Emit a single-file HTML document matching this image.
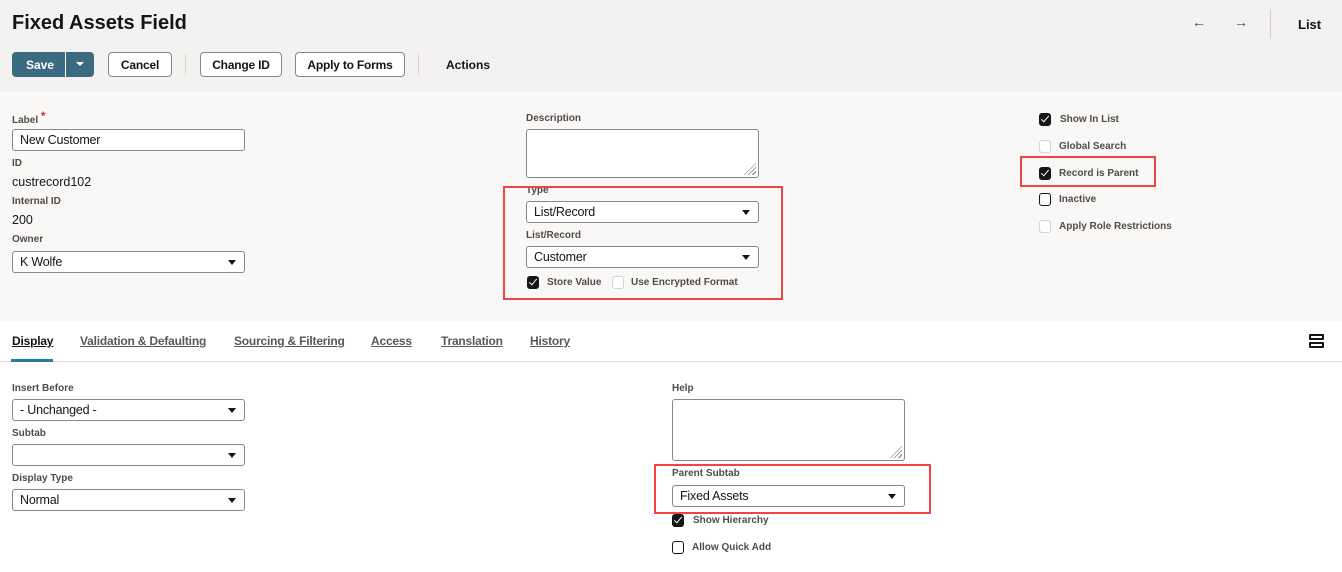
<!DOCTYPE html>
<html><head><style>
*{box-sizing:border-box;margin:0;padding:0}
body{width:1342px;height:572px;position:relative;background:#fff;font-family:"Liberation Sans",Arial,sans-serif;color:#161513;overflow:hidden}
.a{position:absolute}
.hdr{left:0;top:0;width:1342px;height:92px;background:#f3f2f1}
.frm{left:0;top:92px;width:1342px;height:229px;background:#f9f8f7}
.btn{position:absolute;top:52px;height:25px;border:1px solid #8a8886;border-radius:4px;background:#fff;font-size:12px;font-weight:bold;display:flex;align-items:center;justify-content:center;color:#161513;letter-spacing:-0.2px}
.sep{position:absolute;top:54px;width:1px;height:21px;background:#d6d3d0}
.lbl{position:absolute;font-size:10px;font-weight:bold;color:#4f4c49}
.val{position:absolute;font-size:12.5px}
.inp{position:absolute;height:22px;border:1px solid #8a8886;border-radius:3px;background:#fff;font-size:12.5px;padding:3px 7px;line-height:14px;letter-spacing:-0.2px}
.sel::after{content:"";position:absolute;right:8px;top:8px;border-left:4px solid transparent;border-right:4px solid transparent;border-top:5px solid #161513}
.ta{position:absolute;border:1px solid #8a8886;border-radius:3px;background:#fff}
.ta::after{content:"";position:absolute;right:2px;bottom:2px;width:12px;height:12px;background:repeating-linear-gradient(135deg,transparent 0 2px,#777 2px 3px);clip-path:polygon(100% 0,100% 100%,0 100%)}
.cb{position:absolute;width:12px;height:13px;border-radius:3px;border:1.5px solid #161513;background:#fff}
.cb.on{background:#161513}
.cb.on::after{content:"";position:absolute;left:3px;top:0px;width:3px;height:7px;border:solid #fff;border-width:0 1.5px 1.5px 0;transform:rotate(40deg)}
.cb.dis{border:1px solid #d6d3d0}
.ct{position:absolute;font-size:10px;font-weight:bold;color:#4f4c49}
.red{position:absolute;border:2px solid #f04343}
.tab{position:absolute;top:334px;font-size:12px;font-weight:bold;color:#5a5855;letter-spacing:-0.2px;text-decoration:underline;text-decoration-thickness:1px}
</style></head><body>
<div class="a hdr"></div>
<div class="a frm"></div>
<div class="a" style="left:12px;top:12px;font-size:20px;font-weight:bold">Fixed Assets Field</div>
<div class="a" style="left:1192px;top:14px;font-size:14px;font-weight:bold;color:#444">&#8592;</div>
<div class="a" style="left:1234px;top:14px;font-size:14px;font-weight:bold;color:#444">&#8594;</div>
<div class="a" style="left:1270px;top:9px;width:1px;height:30px;background:#d0cdca"></div>
<div class="a" style="left:1298px;top:17px;font-size:13px;font-weight:bold">List</div>

<div class="a" style="left:12px;top:52px;width:82px;height:25px;background:#3a6b81;border-radius:4px"></div>
<div class="a" style="left:65px;top:52px;width:1px;height:25px;background:#fff"></div>
<div class="a" style="left:26px;top:58px;font-size:12px;font-weight:bold;color:#fff">Save</div>
<div class="a" style="left:76px;top:62px;border-left:4px solid transparent;border-right:4px solid transparent;border-top:4px solid #fff"></div>
<div class="btn" style="left:108px;width:64px">Cancel</div>
<div class="sep" style="left:185px"></div>
<div class="btn" style="left:200px;width:82px">Change ID</div>
<div class="btn" style="left:295px;width:110px">Apply to Forms</div>
<div class="sep" style="left:418px"></div>
<div class="a" style="left:446px;top:58px;font-size:12px;font-weight:bold">Actions</div>

<div class="lbl" style="left:12px;top:112px">Label <span style="color:#c33;font-size:12px;position:relative;top:-3px">*</span></div>
<div class="inp" style="left:12px;top:129px;width:233px">New Customer</div>
<div class="lbl" style="left:12px;top:158px">ID</div>
<div class="val" style="left:12px;top:175px">custrecord102</div>
<div class="lbl" style="left:12px;top:196px">Internal ID</div>
<div class="val" style="left:12px;top:213px">200</div>
<div class="lbl" style="left:12px;top:234px">Owner</div>
<div class="inp sel" style="left:12px;top:251px;width:233px">K Wolfe</div>

<div class="lbl" style="left:526px;top:113px">Description</div>
<div class="ta" style="left:526px;top:129px;width:233px;height:49px"></div>
<div class="lbl" style="left:526px;top:185px">Type</div>
<div class="inp sel" style="left:526px;top:201px;width:233px">List/Record</div>
<div class="lbl" style="left:526px;top:230px">List/Record</div>
<div class="inp sel" style="left:526px;top:246px;width:233px">Customer</div>
<div class="cb on" style="left:527px;top:276px"></div>
<div class="ct" style="left:547px;top:277px">Store Value</div>
<div class="cb dis" style="left:612px;top:276px"></div>
<div class="ct" style="left:631px;top:277px">Use Encrypted Format</div>
<div class="red" style="left:503px;top:186px;width:280px;height:114px"></div>

<div class="cb on" style="left:1039px;top:113px"></div>
<div class="ct" style="left:1060px;top:114px">Show In List</div>
<div class="cb dis" style="left:1039px;top:140px"></div>
<div class="ct" style="left:1059px;top:141px">Global Search</div>
<div class="cb on" style="left:1039px;top:167px"></div>
<div class="ct" style="left:1059px;top:168px">Record is Parent</div>
<div class="red" style="left:1020px;top:156px;width:136px;height:31px"></div>
<div class="cb" style="left:1039px;top:193px"></div>
<div class="ct" style="left:1059px;top:194px">Inactive</div>
<div class="cb dis" style="left:1039px;top:220px"></div>
<div class="ct" style="left:1059px;top:221px">Apply Role Restrictions</div>

<div class="tab" style="left:12px;color:#161513">Display</div>
<div class="tab" style="left:80px">Validation &amp; Defaulting</div>
<div class="tab" style="left:234px">Sourcing &amp; Filtering</div>
<div class="tab" style="left:371px">Access</div>
<div class="tab" style="left:441px">Translation</div>
<div class="tab" style="left:530px">History</div>
<div class="a" style="left:0;top:361px;width:1342px;height:1px;background:#dedcda"></div>
<div class="a" style="left:11px;top:359px;width:42px;height:3px;background:#227e9e"></div>
<div class="a" style="left:1309px;top:334px;width:15px;height:6px;border:2px solid #161513;border-radius:1px"></div>
<div class="a" style="left:1309px;top:342px;width:15px;height:6px;border:2px solid #161513;border-radius:1px"></div>

<div class="lbl" style="left:12px;top:383px">Insert Before</div>
<div class="inp sel" style="left:12px;top:399px;width:233px">- Unchanged -</div>
<div class="lbl" style="left:12px;top:428px">Subtab</div>
<div class="inp sel" style="left:12px;top:444px;width:233px"></div>
<div class="lbl" style="left:12px;top:473px">Display Type</div>
<div class="inp sel" style="left:12px;top:489px;width:233px">Normal</div>

<div class="lbl" style="left:672px;top:383px">Help</div>
<div class="ta" style="left:672px;top:399px;width:233px;height:62px"></div>
<div class="lbl" style="left:672px;top:468px">Parent Subtab</div>
<div class="inp sel" style="left:672px;top:485px;width:233px">Fixed Assets</div>
<div class="red" style="left:654px;top:464px;width:277px;height:50px"></div>
<div class="cb on" style="left:672px;top:514px"></div>
<div class="ct" style="left:693px;top:515px">Show Hierarchy</div>
<div class="cb" style="left:672px;top:541px"></div>
<div class="ct" style="left:692px;top:542px">Allow Quick Add</div>
</body></html>
